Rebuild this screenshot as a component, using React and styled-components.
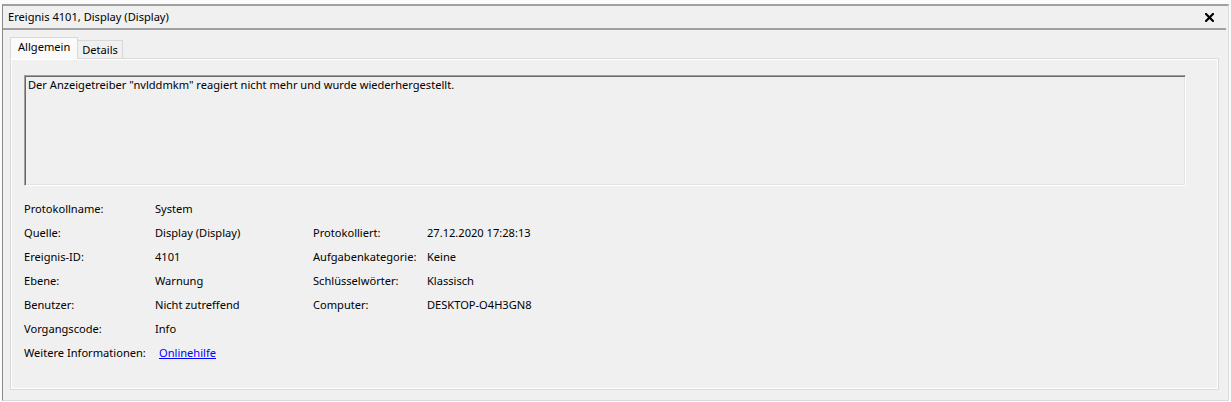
import React from "react";
import styled, { createGlobalStyle } from "styled-components";

const Global = createGlobalStyle`
  html, body { margin: 0; padding: 0; background: #fbfbfb; }
  body { font-family: "Noto Sans", "Open Sans", sans-serif; font-size: 11.1px; color: #000; }
`;

const Window = styled.div`
  margin: 4px 2px 0 2px;
  height: 394px;
  background: #f0f0f0;
  border-top: 2px solid #a0a0a0;
  border-left: 1px solid #8a8a8a;
  border-right: 1px solid #dadada;
  border-bottom: 1px solid #dadada;
  display: flex;
  flex-direction: column;
`;

const TitleBar = styled.div`
  height: 22px;
  display: flex;
  align-items: center;
  justify-content: space-between;
  padding: 0 12px 0 5px;
  border-bottom: 2px solid #a0a0a0;
  margin-right: 2px;
  line-height: 22px;
`;

const Close = styled.button`
  border: 0;
  background: transparent;
  padding: 0;
  width: 10px;
  height: 10px;
  display: flex;
  align-items: center;
  justify-content: center;
`;

const TabArea = styled.div`
  flex: 1;
  display: flex;
  flex-direction: column;
  padding: 7px 9px 10px 7px;
`;

const TabStrip = styled.div`
  display: flex;
  align-items: flex-end;
  height: 22px;
  position: relative;
  z-index: 1;
  margin-bottom: -1px;
`;

const Tab = styled.div`
  height: ${(p) => (p.$active ? 22 : 19)}px;
  box-sizing: border-box;
  padding: 0 ${(p) => (p.$active ? 7 : 4)}px;
  border: 1px solid #d9d9d9;
  border-bottom: ${(p) => (p.$active ? "1px solid #fafafa" : "1px solid #d9d9d9")};
  margin-left: ${(p) => (p.$active ? 0 : -1)}px;
  background: ${(p) => (p.$active ? "#fafafa" : "#f0f0f0")};
  display: flex;
  align-items: center;
  line-height: 1;
  ${(p) => (p.$active ? "padding-bottom: 3px;" : "")}
`;

const Panel = styled.div`
  flex: 1;
  border: 1px solid #d9d9d9;
  box-shadow: inset 1px 1px 0 #ffffff, inset -1px -1px 0 #ffffff;
  padding: 16px 32px 0 13px;
  display: flex;
  flex-direction: column;
`;

const Message = styled.div`
  height: 111px;
  box-sizing: border-box;
  border-top: 1px solid #a0a0a0;
  border-left: 1px solid #a0a0a0;
  border-right: 1px solid #ffffff;
  border-bottom: 1px solid #ffffff;
  box-shadow: inset 1px 1px 0 #696969, inset -1px -1px 0 #e3e3e3;
  padding: 1px 3px;
  line-height: 16px;
`;

const Grid = styled.div`
  margin-top: 11px;
  display: grid;
  grid-template-columns: 131px 158px 114px 1fr;
  grid-auto-rows: 24px;
  align-items: center;
  white-space: nowrap;
`;

const Cell = styled.div`
  line-height: 24px;
`;

const Link = styled.a`
  color: #0000ff;
  text-decoration: underline;
  margin-left: 4px;
  cursor: pointer;
`;

const rows = [
  ["Protokollname:", "System", "", ""],
  ["Quelle:", "Display (Display)", "Protokolliert:", "27.12.2020 17:28:13"],
  ["Ereignis-ID:", "4101", "Aufgabenkategorie:", "Keine"],
  ["Ebene:", "Warnung", "Schlüsselwörter:", "Klassisch"],
  ["Benutzer:", "Nicht zutreffend", "Computer:", "DESKTOP-O4H3GN8"],
  ["Vorgangscode:", "Info", "", ""],
];

export default function App() {
  return (
    <>
      <Global />
      <Window>
        <TitleBar>
          <span>Ereignis 4101, Display (Display)</span>
          <Close aria-label="Schließen">
            <svg width="9" height="9" viewBox="0 0 9 9">
              <path d="M1 1 L8 8 M8 1 L1 8" stroke="#000" strokeWidth="2.2" strokeLinecap="square" />
            </svg>
          </Close>
        </TitleBar>
        <TabArea>
          <TabStrip>
            <Tab $active>Allgemein</Tab>
            <Tab>Details</Tab>
          </TabStrip>
          <Panel>
            <Message>Der Anzeigetreiber "nvlddmkm" reagiert nicht mehr und wurde wiederhergestellt.</Message>
            <Grid>
              {rows.map((r, i) => (
                <React.Fragment key={i}>
                  <Cell>{r[0]}</Cell>
                  <Cell>{r[1]}</Cell>
                  <Cell>{r[2]}</Cell>
                  <Cell>{r[3]}</Cell>
                </React.Fragment>
              ))}
              <Cell>Weitere Informationen:</Cell>
              <Cell>
                <Link>Onlinehilfe</Link>
              </Cell>
            </Grid>
          </Panel>
        </TabArea>
      </Window>
    </>
  );
}
